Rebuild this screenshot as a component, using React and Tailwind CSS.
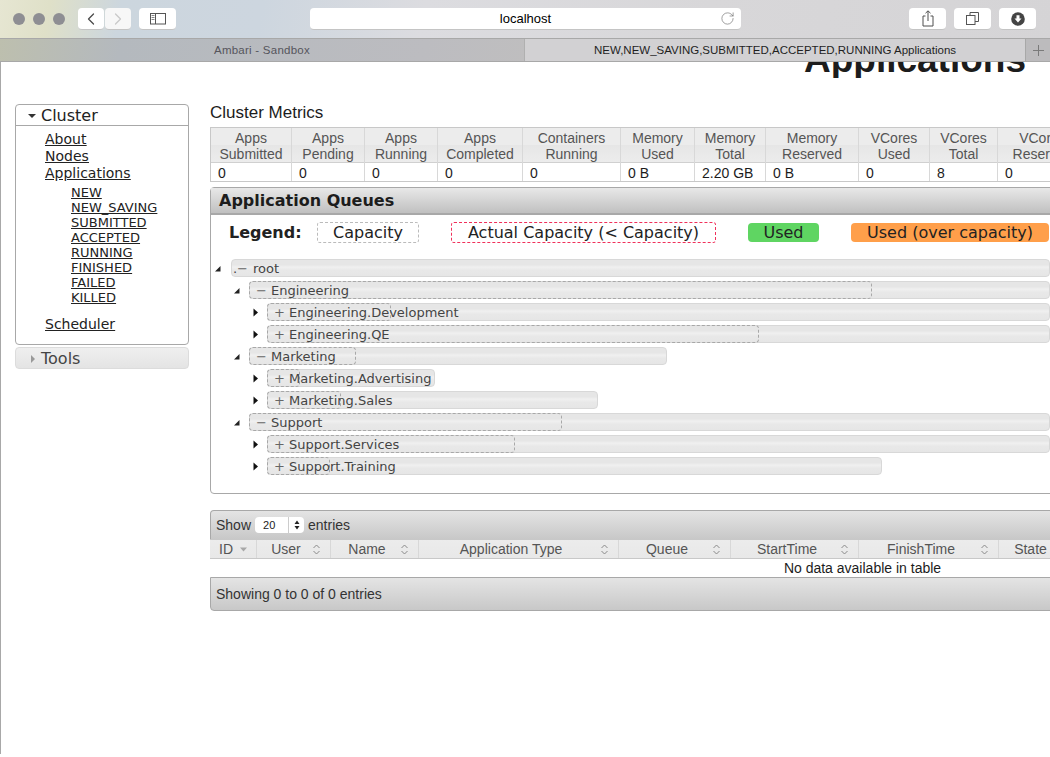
import React from "react";
import { ChevronLeft, ChevronRight, RotateCw } from "lucide-react";

const metricCols = [
  ["Apps", "Submitted", "0", 81],
  ["Apps", "Pending", "0", 73],
  ["Apps", "Running", "0", 73],
  ["Apps", "Completed", "0", 85],
  ["Containers", "Running", "0", 98],
  ["Memory", "Used", "0 B", 74],
  ["Memory", "Total", "2.20 GB", 71],
  ["Memory", "Reserved", "0 B", 93],
  ["VCores", "Used", "0", 71],
  ["VCores", "Total", "8", 68],
  ["VCores", "Reserved", "0", 90],
];

const queues = [
  { name: "root", level: 0, sign: "−", open: true, outer: 819, inner: 0, dot: true },
  { name: "Engineering", level: 1, sign: "−", open: true, outer: 801, inner: 623 },
  { name: "Engineering.Development", level: 2, sign: "+", outer: 783, inner: 124 },
  { name: "Engineering.QE", level: 2, sign: "+", outer: 783, inner: 492 },
  { name: "Marketing", level: 1, sign: "−", open: true, outer: 418, inner: 107 },
  { name: "Marketing.Advertising", level: 2, sign: "+", outer: 168, inner: 33 },
  { name: "Marketing.Sales", level: 2, sign: "+", outer: 331, inner: 74 },
  { name: "Support", level: 1, sign: "−", open: true, outer: 801, inner: 313 },
  { name: "Support.Services", level: 2, sign: "+", outer: 783, inner: 248 },
  { name: "Support.Training", level: 2, sign: "+", outer: 615, inner: 63 },
];

const tableCols = [
  ["ID", 47, "left", "desc"],
  ["User", 74, "center"],
  ["Name", 88, "center"],
  ["Application Type", 200, "center"],
  ["Queue", 112, "center"],
  ["StartTime", 128, "center"],
  ["FinishTime", 140, "center"],
  ["State", 70, "center"],
];

function ToolButton({ children, className = "w-[37px]" }) {
  return (
    <div className={`${className} h-[22px] bg-white rounded-[4px] border-b border-[#c4c4c4] flex items-center justify-center shrink-0`}>
      {children}
    </div>
  );
}

function SortIcon({ desc }) {
  if (desc) {
    return (
      <svg width="9" height="5" viewBox="0 0 9 5" className="shrink-0">
        <path d="M1 0.5h7L4.5 4.5z" fill="#a8a8a8" />
      </svg>
    );
  }
  return (
    <svg width="9" height="11" viewBox="0 0 9 11" className="shrink-0">
      <path d="M1.5 4 4.5 1l3 3M1.5 7l3 3 3-3" fill="none" stroke="#8a8a8a" strokeWidth="1" />
    </svg>
  );
}

function TreeArrow({ open }) {
  return open ? (
    <svg width="7" height="7" viewBox="0 0 7 7"><path d="M6.5 1v5.5H1z" fill="#222" /></svg>
  ) : (
    <svg width="7" height="9" viewBox="0 0 7 9"><path d="M1.5 0.5 6 4.5 1.5 8.5z" fill="#111" /></svg>
  );
}

function QueueRow({ q }) {
  const indent = ["w-[20px]", "w-[38px]", "w-[56px]"][q.level];
  const pad = ["pl-[1px]", "pl-[6px]", "pl-[6px]"][q.level];
  const arrow = ["pl-[3px]", "pl-[22px]", "pl-[41px]"][q.level];
  return (
    <div className="flex items-center h-[18px] mb-[4px] relative">
      <div className={`${indent} shrink-0 ${arrow} flex items-center`}>
        <TreeArrow open={q.open} />
      </div>
      <div
        className="h-[18px] shrink-0 relative rounded-[4px] border border-[#d8d8d8] bg-[linear-gradient(#e6e6e6_0%,#e6e6e6_30%,#f0f0f0_45%,#e8e8e8_65%,#e6e6e6_100%)]"
        style={{ width: q.outer }}
      >
        {q.inner > 0 && (
          <div
            className="absolute -left-px -top-px h-[18px] rounded-[4px] border border-dashed border-[#a8a8a8]"
            style={{ width: q.inner }}
          />
        )}
        <div className={`absolute left-0 top-[1px] h-[16px] flex items-center whitespace-nowrap ${pad} text-[13px] text-[#444] font-['DejaVu_Sans',sans-serif]`}>
          {q.dot && <span className="w-[4px] text-[#444]">.</span>}
          <span className={`${q.level === 0 ? "w-[16px]" : "w-[15px]"} text-[#666]`}>{q.sign}</span>
          <span>{q.name}</span>
        </div>
      </div>
    </div>
  );
}

export default function App() {
  return (
    <div className="w-[1050px] h-[757px] overflow-hidden bg-white flex flex-col font-['Liberation_Sans',sans-serif]">
      {/* Browser toolbar */}
      <div className="h-[38px] shrink-0 flex items-center bg-[linear-gradient(100deg,#e6e6d2_0px,#dfe0c8_50px,#ccd6de_120px,#cdd6df_260px,#dcdce0_420px,#d8d7d9_700px,#d5d4d6_1050px)]">
        <div className="flex items-center gap-[8px] pl-[13px] w-[78px] shrink-0">
          <span className="w-[12px] h-[12px] rounded-full bg-[#8e8e93]" />
          <span className="w-[12px] h-[12px] rounded-full bg-[#8e8e93]" />
          <span className="w-[12px] h-[12px] rounded-full bg-[#8e8e93]" />
        </div>
        <ToolButton className="w-[26px] mr-[1px]">
          <ChevronLeft size={20} strokeWidth={1.5} className="text-[#4a4a4a]" />
        </ToolButton>
        <ToolButton className="w-[26px] mr-[8px] !bg-[#f7f7f7]">
          <ChevronRight size={20} strokeWidth={1.5} className="text-[#c9c9c9]" />
        </ToolButton>
        <ToolButton className="w-[37px] mr-[134px]">
          <svg width="16" height="12" viewBox="0 0 16 12">
            <rect x="0.5" y="0.5" width="15" height="10.5" fill="none" stroke="#555" />
            <path d="M5.5 0.5v10.5" stroke="#555" />
            <path d="M1.5 2.5h3M1.5 4.5h3M1.5 6.5h3" stroke="#888" />
          </svg>
        </ToolButton>
        <div className="w-[431px] h-[22px] shrink-0 mr-[168px] bg-white rounded-[4px] border-b border-[#c4c4c4] relative flex items-center justify-center text-[13px] text-black">
          localhost
          <RotateCw size={15} strokeWidth={1} className="absolute right-[6px] top-[3px] text-[#666]" />
        </div>
        <ToolButton className="w-[37px] mr-[8px]">
          <svg width="12" height="17" viewBox="0 0 12 17">
            <path d="M3.5 6H1v10h10V6H8.5M6 11V1M3.5 3.2 6 .8l2.500 2.400" fill="none" stroke="#4e4e4e" />
          </svg>
        </ToolButton>
        <ToolButton className="w-[37px] mr-[8px]">
          <svg width="13" height="13" viewBox="0 0 13 13">
            <rect x="0.500" y="3.500" width="8.500" height="9" fill="none" stroke="#555" />
            <path d="M4 3.500V0.500h8.500V9.500H9" fill="none" stroke="#555" />
          </svg>
        </ToolButton>
        <ToolButton className="w-[37px]">
          <svg width="14" height="14" viewBox="0 0 14 14">
            <circle cx="7" cy="7" r="6.800" fill="#444" />
            <path d="M5.500 3.200h3v3.300h2L7 10.500 3.500 6.500h2z" fill="#fff" />
          </svg>
        </ToolButton>
      </div>

      {/* Tabs */}
      <div className="h-[24px] shrink-0 flex text-[11.5px] border-y border-[#a8a8a8]">
        <div className="w-[524px] pt-[1px] flex items-center justify-center tracking-[0.25px] text-[#55555c] bg-[linear-gradient(100deg,#bdbfae_0px,#b4b9be_120px,#bcbcc0_420px,#bfbebf_524px)]">
          Ambari - Sandbox
        </div>
        <div className="flex-1 pt-[1px] flex items-center justify-center whitespace-nowrap text-[#1f1f1f] bg-[#d2d1d3] border-l border-[#b0b0b0]">
          NEW,NEW_SAVING,SUBMITTED,ACCEPTED,RUNNING Applications
        </div>
        <div className="w-[25px] flex items-center justify-center border-l border-[#a8a8a8] bg-[#bcbbbd]">
          <svg width="11" height="11" viewBox="0 0 11 11"><path d="M5.500 0v11M0 5.500h11" stroke="#7a7a7a" /></svg>
        </div>
      </div>

      {/* Page */}
      <div className="flex-1 min-h-0 mb-[3px] border-l border-[#a8a8a8] overflow-hidden">
        <div className="h-[16px] overflow-hidden flex justify-end pr-[24px]">
          <h1 className="mt-[-22px] h-[40px] text-[37px] leading-[40px] font-bold text-[#1c1c1c]">Applications</h1>
        </div>
        <div className="flex pt-[26px] pl-[14px]">
          {/* Sidebar */}
          <aside className="w-[174px] shrink-0 mr-[21px] font-['DejaVu_Sans',sans-serif]">
            <div className="h-[241px] rounded-[4px] border border-[#a8a8a8]">
              <div className="h-[21px] pt-[1px] flex items-center border-b border-[#a8a8a8] pl-[12px] text-[16px] text-[#222]">
                <svg width="8" height="4" viewBox="0 0 8 4" className="mr-[5px]"><path d="M0 0h8L4 4z" fill="#333" /></svg>
                Cluster
              </div>
              <div className="pl-[29px] pt-[5px] text-[14px] leading-[17px] text-[#222] underline flex flex-col items-start">
                <a>About</a>
                <a>Nodes</a>
                <a>Applications</a>
                <div className="pl-[26px] pt-[3px] pb-[11px] text-[13px] leading-[15px] flex flex-col items-start">
                  <a>NEW</a>
                  <a>NEW_SAVING</a>
                  <a>SUBMITTED</a>
                  <a>ACCEPTED</a>
                  <a>RUNNING</a>
                  <a>FINISHED</a>
                  <a>FAILED</a>
                  <a>KILLED</a>
                </div>
                <a>Scheduler</a>
              </div>
            </div>
            <div className="mt-[2px] h-[22px] rounded-[4px] border border-[#dcdcdc] bg-[linear-gradient(#efefef,#e4e4e4)] flex items-center pl-[15px] pt-[2px] text-[16px] text-[#444]">
              <svg width="4" height="8" viewBox="0 0 4 8" className="mr-[6px]"><path d="M0 0l4 4-4 4z" fill="#999" /></svg>
              Tools
            </div>
          </aside>

          {/* Main */}
          <main className="w-[900px] shrink-0">
            <div className="text-[17px] leading-[18px] text-[#1c1c1c] h-[23px]">Cluster Metrics</div>

            <div className="flex border-t border-b border-l border-[#c8c8c8] w-[900px] text-[14px] leading-[16px]">
              {metricCols.map(([a, b, v, w], i) => (
                <div key={i} className="shrink-0 border-r border-[#d8d8d8]" style={{ width: w }}>
                  <div className="h-[35px] pt-[2px] flex flex-col items-center justify-center text-[#555] bg-[linear-gradient(#ececec_0%,#ececec_50%,#e6e6e6_50%,#ececec_100%)] border-b border-[#d0d0d0]">
                    <span>{a}</span>
                    <span>{b}</span>
                  </div>
                  <div className="h-[18px] pl-[7px] pt-[1px] flex items-center text-[#1c1c1c] bg-white">{v}</div>
                </div>
              ))}
            </div>

            {/* Queues */}
            <div className="mt-[5px] h-[307px] w-[900px] rounded-[4px] border border-[#a8a8a8] flex flex-col">
              <div className="h-[27px] pt-[1px] shrink-0 border-b-2 border-[#a8a8a8] bg-[linear-gradient(#e8e8e8,#c0c0c0)] pl-[8px] flex items-center font-['DejaVu_Sans',sans-serif] text-[16px] font-bold text-[#1c1c1c]">
                Application Queues
              </div>
              <div className="flex items-center h-[21px] mt-[7px] pl-[18px] font-['DejaVu_Sans',sans-serif] text-[16px] text-[#222]">
                <b className="w-[88px] shrink-0 text-[#222]">Legend:</b>
                <span className="w-[102px] h-[21px] shrink-0 mr-[32px] rounded-[3px] border border-dashed border-[#bbbbbb] flex items-center justify-center">Capacity</span>
                <span className="w-[265px] h-[21px] shrink-0 mr-[32px] rounded-[3px] border border-dashed border-[#f0305a] flex items-center justify-center">Actual Capacity (&lt; Capacity)</span>
                <span className="w-[71px] h-[19px] shrink-0 mr-[32px] rounded-[4px] bg-[#5fd562] flex items-center justify-center">Used</span>
                <span className="w-[198px] h-[19px] shrink-0 rounded-[4px] bg-[#ff9f4a] flex items-center justify-center">Used (over capacity)</span>
              </div>
              <div className="mt-[16px]">
                {queues.map((q) => (
                  <QueueRow key={q.name} q={q} />
                ))}
              </div>
            </div>

            {/* Table */}
            <div className="mt-[16px] w-[900px] text-[14px]">
              <div className="h-[29px] rounded-t-[4px] border border-b-0 border-[#a8a8a8] bg-[linear-gradient(#e4e4e4,#c8c8c8)] flex items-center pl-[5px] text-[#333]">
                Show
                <span className="ml-[4px] mr-[4px] w-[49px] h-[16px] rounded-[4px] bg-white flex items-center text-[11px] text-[#222] pl-[8px] relative">
                  20
                  <span className="absolute right-0 top-0 h-[16px] w-[16px] border-l border-[#cccccc] flex items-center justify-center">
                    <svg width="6" height="10" viewBox="0 0 6 10"><path d="M3 0.500 5.500 4H.5zM3 9.500 .5 6h5z" fill="#222" /></svg>
                  </span>
                </span>
                entries
              </div>
              <div className="flex h-[20px] border-y border-[#c8c8c8] bg-[linear-gradient(#ececec,#e8e8e8)] text-[#555]">
                {tableCols.map(([name, w, align, dir]) => (
                  <div key={name} className={`shrink-0 relative flex items-center pt-[1px] ${align === "center" ? "pl-[3px] pr-[9px]" : "pl-[9px] pr-[9px]"} border-r border-[#d8d8d8]`} style={{ width: w }}>
                    <span className={align === "center" ? "flex-1 text-center" : "mr-[6px]"}>{name}</span>
                    {name !== "State" && <SortIcon desc={dir === "desc"} />}
                  </div>
                ))}
              </div>
              <div className="h-[18px] pt-[1px] flex items-center justify-center text-[#1c1c1c] w-[859px] pl-[446px]">
                <span className="whitespace-nowrap">No data available in table</span>
              </div>
              <div className="h-[34px] rounded-b-[4px] border border-[#a8a8a8] bg-[linear-gradient(#e4e4e4,#c8c8c8)] flex items-center pl-[5px] text-[#333]">
                Showing 0 to 0 of 0 entries
              </div>
            </div>
          </main>
        </div>
      </div>
    </div>
  );
}
